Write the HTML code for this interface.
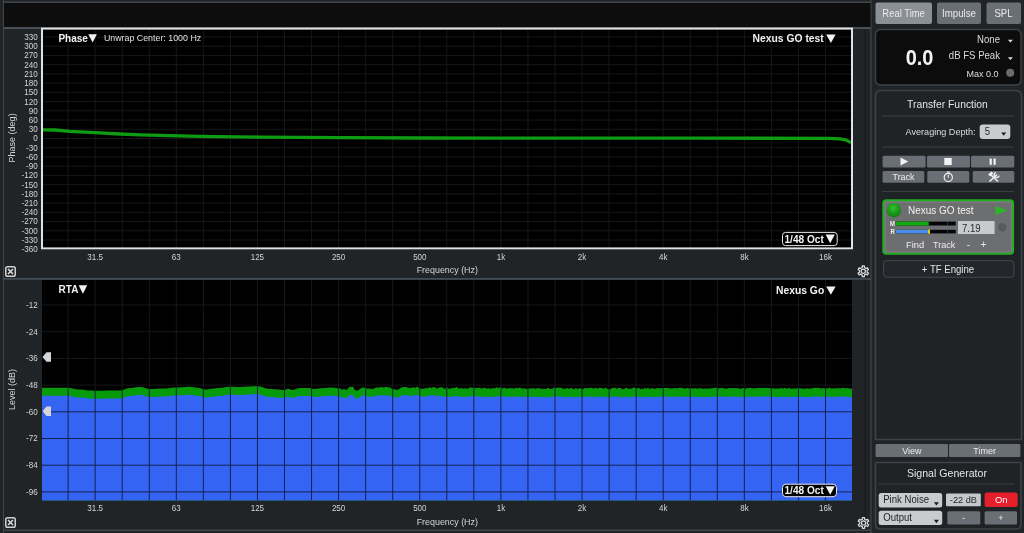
<!DOCTYPE html>
<html><head><meta charset="utf-8"><style>
html,body{margin:0;padding:0;background:#212427;width:1024px;height:533px;overflow:hidden}
svg{display:block;font-family:"Liberation Sans",sans-serif;filter:blur(0.4px)}
</style></head><body>
<svg width="1024" height="533" viewBox="0 0 1024 533">
<rect x="3" y="0" width="1" height="533" fill="#42464b" />
<rect x="870.2" y="0" width="1.4" height="533" fill="#3c4045" />
<rect x="864.2" y="29" width="1.5" height="533" fill="#1c1e21" />
<rect x="3" y="1.5" width="868" height="1.5" fill="#42464b" />
<rect x="4" y="3" width="866.5" height="24" fill="#0d0d0d" />
<rect x="4" y="27" width="867" height="2" fill="#4a5057" />
<rect x="41" y="28" width="812" height="222" fill="#000" />
<line x1="68.1" y1="30" x2="68.1" y2="248" stroke="#171717" stroke-width="1"/>
<line x1="95.15" y1="30" x2="95.15" y2="248" stroke="#171717" stroke-width="1"/>
<line x1="122.2" y1="30" x2="122.2" y2="248" stroke="#171717" stroke-width="1"/>
<line x1="149.25" y1="30" x2="149.25" y2="248" stroke="#171717" stroke-width="1"/>
<line x1="176.3" y1="30" x2="176.3" y2="248" stroke="#171717" stroke-width="1"/>
<line x1="203.35" y1="30" x2="203.35" y2="248" stroke="#171717" stroke-width="1"/>
<line x1="230.4" y1="30" x2="230.4" y2="248" stroke="#171717" stroke-width="1"/>
<line x1="257.45" y1="30" x2="257.45" y2="248" stroke="#171717" stroke-width="1"/>
<line x1="284.5" y1="30" x2="284.5" y2="248" stroke="#171717" stroke-width="1"/>
<line x1="311.55" y1="30" x2="311.55" y2="248" stroke="#171717" stroke-width="1"/>
<line x1="338.6" y1="30" x2="338.6" y2="248" stroke="#171717" stroke-width="1"/>
<line x1="365.65" y1="30" x2="365.65" y2="248" stroke="#171717" stroke-width="1"/>
<line x1="392.7" y1="30" x2="392.7" y2="248" stroke="#171717" stroke-width="1"/>
<line x1="419.75" y1="30" x2="419.75" y2="248" stroke="#171717" stroke-width="1"/>
<line x1="446.8" y1="30" x2="446.8" y2="248" stroke="#171717" stroke-width="1"/>
<line x1="473.85" y1="30" x2="473.85" y2="248" stroke="#171717" stroke-width="1"/>
<line x1="500.9" y1="30" x2="500.9" y2="248" stroke="#171717" stroke-width="1"/>
<line x1="527.95" y1="30" x2="527.95" y2="248" stroke="#171717" stroke-width="1"/>
<line x1="555.0" y1="30" x2="555.0" y2="248" stroke="#171717" stroke-width="1"/>
<line x1="582.05" y1="30" x2="582.05" y2="248" stroke="#171717" stroke-width="1"/>
<line x1="609.1" y1="30" x2="609.1" y2="248" stroke="#171717" stroke-width="1"/>
<line x1="636.15" y1="30" x2="636.15" y2="248" stroke="#171717" stroke-width="1"/>
<line x1="663.2" y1="30" x2="663.2" y2="248" stroke="#171717" stroke-width="1"/>
<line x1="690.25" y1="30" x2="690.25" y2="248" stroke="#171717" stroke-width="1"/>
<line x1="717.3" y1="30" x2="717.3" y2="248" stroke="#171717" stroke-width="1"/>
<line x1="744.35" y1="30" x2="744.35" y2="248" stroke="#171717" stroke-width="1"/>
<line x1="771.4" y1="30" x2="771.4" y2="248" stroke="#171717" stroke-width="1"/>
<line x1="798.45" y1="30" x2="798.45" y2="248" stroke="#171717" stroke-width="1"/>
<line x1="825.5" y1="30" x2="825.5" y2="248" stroke="#171717" stroke-width="1"/>
<line x1="43" y1="37.0" x2="851" y2="37.0" stroke="#171717" stroke-width="1"/>
<line x1="43" y1="46.23" x2="851" y2="46.23" stroke="#171717" stroke-width="1"/>
<line x1="43" y1="55.45" x2="851" y2="55.45" stroke="#171717" stroke-width="1"/>
<line x1="43" y1="64.68" x2="851" y2="64.68" stroke="#171717" stroke-width="1"/>
<line x1="43" y1="73.91" x2="851" y2="73.91" stroke="#171717" stroke-width="1"/>
<line x1="43" y1="83.14" x2="851" y2="83.14" stroke="#171717" stroke-width="1"/>
<line x1="43" y1="92.36" x2="851" y2="92.36" stroke="#171717" stroke-width="1"/>
<line x1="43" y1="101.59" x2="851" y2="101.59" stroke="#171717" stroke-width="1"/>
<line x1="43" y1="110.82" x2="851" y2="110.82" stroke="#171717" stroke-width="1"/>
<line x1="43" y1="120.05" x2="851" y2="120.05" stroke="#171717" stroke-width="1"/>
<line x1="43" y1="129.27" x2="851" y2="129.27" stroke="#171717" stroke-width="1"/>
<line x1="43" y1="138.5" x2="851" y2="138.5" stroke="#171717" stroke-width="1"/>
<line x1="43" y1="147.73" x2="851" y2="147.73" stroke="#171717" stroke-width="1"/>
<line x1="43" y1="156.95" x2="851" y2="156.95" stroke="#171717" stroke-width="1"/>
<line x1="43" y1="166.18" x2="851" y2="166.18" stroke="#171717" stroke-width="1"/>
<line x1="43" y1="175.41" x2="851" y2="175.41" stroke="#171717" stroke-width="1"/>
<line x1="43" y1="184.64" x2="851" y2="184.64" stroke="#171717" stroke-width="1"/>
<line x1="43" y1="193.86" x2="851" y2="193.86" stroke="#171717" stroke-width="1"/>
<line x1="43" y1="203.09" x2="851" y2="203.09" stroke="#171717" stroke-width="1"/>
<line x1="43" y1="212.32" x2="851" y2="212.32" stroke="#171717" stroke-width="1"/>
<line x1="43" y1="221.55" x2="851" y2="221.55" stroke="#171717" stroke-width="1"/>
<line x1="43" y1="230.77" x2="851" y2="230.77" stroke="#171717" stroke-width="1"/>
<line x1="43" y1="240.0" x2="851" y2="240.0" stroke="#171717" stroke-width="1"/>
<path d="M43,129.8 L55,130.0 L70,131.3 L95,132.7 L120,134.0 L140,134.8 L170,135.7 L200,136.3 L260,137.1 L340,137.7 L420,138.0 L500,138.1 L700,138.2 L830,138.3 L840,138.8 L846,140.0 L851,142.6" fill="none" stroke="#0e9c12" stroke-width="3.3" stroke-linejoin="round"/>
<rect x="42" y="28.6" width="810" height="219.8" fill="none" stroke="#e2e2e2" stroke-width="2"/>
<text transform="translate(37.8 39.9) scale(1 1.06)" font-size="8.1" fill="#d4d4d4" text-anchor="end" font-weight="normal" >330</text>
<text transform="translate(37.8 49.1) scale(1 1.06)" font-size="8.1" fill="#d4d4d4" text-anchor="end" font-weight="normal" >300</text>
<text transform="translate(37.8 58.4) scale(1 1.06)" font-size="8.1" fill="#d4d4d4" text-anchor="end" font-weight="normal" >270</text>
<text transform="translate(37.8 67.6) scale(1 1.06)" font-size="8.1" fill="#d4d4d4" text-anchor="end" font-weight="normal" >240</text>
<text transform="translate(37.8 76.8) scale(1 1.06)" font-size="8.1" fill="#d4d4d4" text-anchor="end" font-weight="normal" >210</text>
<text transform="translate(37.8 86.0) scale(1 1.06)" font-size="8.1" fill="#d4d4d4" text-anchor="end" font-weight="normal" >180</text>
<text transform="translate(37.8 95.3) scale(1 1.06)" font-size="8.1" fill="#d4d4d4" text-anchor="end" font-weight="normal" >150</text>
<text transform="translate(37.8 104.5) scale(1 1.06)" font-size="8.1" fill="#d4d4d4" text-anchor="end" font-weight="normal" >120</text>
<text transform="translate(37.8 113.7) scale(1 1.06)" font-size="8.1" fill="#d4d4d4" text-anchor="end" font-weight="normal" >90</text>
<text transform="translate(37.8 122.9) scale(1 1.06)" font-size="8.1" fill="#d4d4d4" text-anchor="end" font-weight="normal" >60</text>
<text transform="translate(37.8 132.2) scale(1 1.06)" font-size="8.1" fill="#d4d4d4" text-anchor="end" font-weight="normal" >30</text>
<text transform="translate(37.8 141.4) scale(1 1.06)" font-size="8.1" fill="#d4d4d4" text-anchor="end" font-weight="normal" >0</text>
<text transform="translate(37.8 150.6) scale(1 1.06)" font-size="8.1" fill="#d4d4d4" text-anchor="end" font-weight="normal" >-30</text>
<text transform="translate(37.8 159.9) scale(1 1.06)" font-size="8.1" fill="#d4d4d4" text-anchor="end" font-weight="normal" >-60</text>
<text transform="translate(37.8 169.1) scale(1 1.06)" font-size="8.1" fill="#d4d4d4" text-anchor="end" font-weight="normal" >-90</text>
<text transform="translate(37.8 178.3) scale(1 1.06)" font-size="8.1" fill="#d4d4d4" text-anchor="end" font-weight="normal" >-120</text>
<text transform="translate(37.8 187.5) scale(1 1.06)" font-size="8.1" fill="#d4d4d4" text-anchor="end" font-weight="normal" >-150</text>
<text transform="translate(37.8 196.8) scale(1 1.06)" font-size="8.1" fill="#d4d4d4" text-anchor="end" font-weight="normal" >-180</text>
<text transform="translate(37.8 206.0) scale(1 1.06)" font-size="8.1" fill="#d4d4d4" text-anchor="end" font-weight="normal" >-210</text>
<text transform="translate(37.8 215.2) scale(1 1.06)" font-size="8.1" fill="#d4d4d4" text-anchor="end" font-weight="normal" >-240</text>
<text transform="translate(37.8 224.4) scale(1 1.06)" font-size="8.1" fill="#d4d4d4" text-anchor="end" font-weight="normal" >-270</text>
<text transform="translate(37.8 233.7) scale(1 1.06)" font-size="8.1" fill="#d4d4d4" text-anchor="end" font-weight="normal" >-300</text>
<text transform="translate(37.8 242.9) scale(1 1.06)" font-size="8.1" fill="#d4d4d4" text-anchor="end" font-weight="normal" >-330</text>
<text transform="translate(37.8 252.1) scale(1 1.06)" font-size="8.1" fill="#d4d4d4" text-anchor="end" font-weight="normal" >-360</text>
<text transform="translate(95.1 259.6) scale(1 1.06)" font-size="8.0" fill="#d4d4d4" text-anchor="middle" font-weight="normal" >31.5</text>
<text transform="translate(176.3 259.6) scale(1 1.06)" font-size="8.0" fill="#d4d4d4" text-anchor="middle" font-weight="normal" >63</text>
<text transform="translate(257.4 259.6) scale(1 1.06)" font-size="8.0" fill="#d4d4d4" text-anchor="middle" font-weight="normal" >125</text>
<text transform="translate(338.6 259.6) scale(1 1.06)" font-size="8.0" fill="#d4d4d4" text-anchor="middle" font-weight="normal" >250</text>
<text transform="translate(419.8 259.6) scale(1 1.06)" font-size="8.0" fill="#d4d4d4" text-anchor="middle" font-weight="normal" >500</text>
<text transform="translate(500.9 259.6) scale(1 1.06)" font-size="8.0" fill="#d4d4d4" text-anchor="middle" font-weight="normal" >1k</text>
<text transform="translate(582.0 259.6) scale(1 1.06)" font-size="8.0" fill="#d4d4d4" text-anchor="middle" font-weight="normal" >2k</text>
<text transform="translate(663.2 259.6) scale(1 1.06)" font-size="8.0" fill="#d4d4d4" text-anchor="middle" font-weight="normal" >4k</text>
<text transform="translate(744.4 259.6) scale(1 1.06)" font-size="8.0" fill="#d4d4d4" text-anchor="middle" font-weight="normal" >8k</text>
<text transform="translate(825.5 259.6) scale(1 1.06)" font-size="8.0" fill="#d4d4d4" text-anchor="middle" font-weight="normal" >16k</text>
<text transform="translate(447.3 273.1) scale(1 1.06)" font-size="8.9" fill="#d4d4d4" text-anchor="middle" font-weight="normal" >Frequency (Hz)</text>
<text x="15.3" y="137.9" font-size="9" fill="#d4d4d4" text-anchor="middle" transform="rotate(-90 15.3 137.9)">Phase (deg)</text>
<text x="58.4" y="41.6" font-size="10.0" fill="#f2f2f2" text-anchor="start" font-weight="bold" >Phase</text>
<path d="M88.3,34.3 L96.9,34.3 L92.6,42.6 Z" fill="#f2f2f2"/>
<text transform="translate(103.9 40.8) scale(1 1.06)" font-size="8.85" fill="#e0e0e0" text-anchor="start" font-weight="normal" >Unwrap Center: 1000 Hz</text>
<text transform="translate(823.8 41.8) scale(1 0.97)" font-size="10.35" fill="#f2f2f2" text-anchor="end" font-weight="bold" >Nexus GO test</text>
<path d="M826.2,34.6 L835.6,34.6 L830.9,43 Z" fill="#f2f2f2"/>
<rect x="782.5" y="232.4" width="54.7" height="13.2" rx="3" fill="#000" stroke="#e8e8e8" stroke-width="1"/>
<text transform="translate(784.5 242.8) scale(1 1.06)" font-size="10.1" fill="#f2f2f2" text-anchor="start" font-weight="bold" >1/48 Oct</text>
<path d="M825.6,234.6 L834.8,234.6 L830.2,243.2 Z" fill="#f2f2f2"/>
<rect x="5.75" y="266.75" width="9.5" height="9.5" rx="1.8" fill="none" stroke="#d0d0d0" stroke-width="1.5"/>
<path d="M8,269 L13,274 M13,269 L8,274" stroke="#e0e0e0" stroke-width="1.5"/>
<polygon points="862.25,265.90 864.35,265.90 864.44,267.57 865.96,268.45 867.45,267.69 868.50,269.51 867.10,270.42 867.10,272.18 868.50,273.09 867.45,274.91 865.96,274.15 864.44,275.03 864.35,276.70 862.25,276.70 862.16,275.03 860.64,274.15 859.15,274.91 858.10,273.09 859.50,272.18 859.50,270.42 858.10,269.51 859.15,267.69 860.64,268.45 862.16,267.57" fill="none" stroke="#dcdcdc" stroke-width="1.25" stroke-linejoin="round"/>
<circle cx="863.3" cy="271.3" r="2.1" fill="none" stroke="#dcdcdc" stroke-width="1.2"/>
<rect x="3" y="278.2" width="868" height="1.4" fill="#4d5862" />
<rect x="42" y="280" width="810" height="220.5" fill="#000" />
<line x1="68.1" y1="280" x2="68.1" y2="500.5" stroke="#171717" stroke-width="1"/>
<line x1="95.15" y1="280" x2="95.15" y2="500.5" stroke="#171717" stroke-width="1"/>
<line x1="122.2" y1="280" x2="122.2" y2="500.5" stroke="#171717" stroke-width="1"/>
<line x1="149.25" y1="280" x2="149.25" y2="500.5" stroke="#171717" stroke-width="1"/>
<line x1="176.3" y1="280" x2="176.3" y2="500.5" stroke="#171717" stroke-width="1"/>
<line x1="203.35" y1="280" x2="203.35" y2="500.5" stroke="#171717" stroke-width="1"/>
<line x1="230.4" y1="280" x2="230.4" y2="500.5" stroke="#171717" stroke-width="1"/>
<line x1="257.45" y1="280" x2="257.45" y2="500.5" stroke="#171717" stroke-width="1"/>
<line x1="284.5" y1="280" x2="284.5" y2="500.5" stroke="#171717" stroke-width="1"/>
<line x1="311.55" y1="280" x2="311.55" y2="500.5" stroke="#171717" stroke-width="1"/>
<line x1="338.6" y1="280" x2="338.6" y2="500.5" stroke="#171717" stroke-width="1"/>
<line x1="365.65" y1="280" x2="365.65" y2="500.5" stroke="#171717" stroke-width="1"/>
<line x1="392.7" y1="280" x2="392.7" y2="500.5" stroke="#171717" stroke-width="1"/>
<line x1="419.75" y1="280" x2="419.75" y2="500.5" stroke="#171717" stroke-width="1"/>
<line x1="446.8" y1="280" x2="446.8" y2="500.5" stroke="#171717" stroke-width="1"/>
<line x1="473.85" y1="280" x2="473.85" y2="500.5" stroke="#171717" stroke-width="1"/>
<line x1="500.9" y1="280" x2="500.9" y2="500.5" stroke="#171717" stroke-width="1"/>
<line x1="527.95" y1="280" x2="527.95" y2="500.5" stroke="#171717" stroke-width="1"/>
<line x1="555.0" y1="280" x2="555.0" y2="500.5" stroke="#171717" stroke-width="1"/>
<line x1="582.05" y1="280" x2="582.05" y2="500.5" stroke="#171717" stroke-width="1"/>
<line x1="609.1" y1="280" x2="609.1" y2="500.5" stroke="#171717" stroke-width="1"/>
<line x1="636.15" y1="280" x2="636.15" y2="500.5" stroke="#171717" stroke-width="1"/>
<line x1="663.2" y1="280" x2="663.2" y2="500.5" stroke="#171717" stroke-width="1"/>
<line x1="690.25" y1="280" x2="690.25" y2="500.5" stroke="#171717" stroke-width="1"/>
<line x1="717.3" y1="280" x2="717.3" y2="500.5" stroke="#171717" stroke-width="1"/>
<line x1="744.35" y1="280" x2="744.35" y2="500.5" stroke="#171717" stroke-width="1"/>
<line x1="771.4" y1="280" x2="771.4" y2="500.5" stroke="#171717" stroke-width="1"/>
<line x1="798.45" y1="280" x2="798.45" y2="500.5" stroke="#171717" stroke-width="1"/>
<line x1="825.5" y1="280" x2="825.5" y2="500.5" stroke="#171717" stroke-width="1"/>
<line x1="42" y1="305.0" x2="852" y2="305.0" stroke="#171717" stroke-width="1"/>
<line x1="42" y1="331.7" x2="852" y2="331.7" stroke="#171717" stroke-width="1"/>
<line x1="42" y1="358.4" x2="852" y2="358.4" stroke="#171717" stroke-width="1"/>
<line x1="42" y1="385.1" x2="852" y2="385.1" stroke="#171717" stroke-width="1"/>
<line x1="42" y1="411.8" x2="852" y2="411.8" stroke="#171717" stroke-width="1"/>
<line x1="42" y1="438.5" x2="852" y2="438.5" stroke="#171717" stroke-width="1"/>
<line x1="42" y1="465.2" x2="852" y2="465.2" stroke="#171717" stroke-width="1"/>
<line x1="42" y1="491.9" x2="852" y2="491.9" stroke="#171717" stroke-width="1"/>
<polygon points="42.0,387.80 44.0,387.80 46.0,387.80 48.0,387.80 50.0,387.80 52.0,387.80 54.0,387.80 56.0,387.80 58.0,387.80 60.0,387.80 62.0,387.80 64.0,387.80 66.0,387.80 68.0,387.82 70.0,388.01 72.0,388.35 74.0,388.75 76.0,389.13 78.0,389.40 80.0,389.50 82.0,389.60 84.0,389.85 86.0,390.15 88.0,390.40 90.0,390.50 92.0,390.57 94.0,390.68 96.0,390.70 98.0,390.69 100.0,390.68 102.0,390.66 104.0,390.64 106.0,390.62 108.0,390.59 110.0,390.57 112.0,390.55 114.0,390.53 116.0,390.51 118.0,390.50 120.0,390.50 122.0,390.26 124.0,389.64 126.0,388.86 128.0,388.24 130.0,388.00 132.0,387.89 134.0,387.62 136.0,387.28 138.0,387.01 140.0,386.90 142.0,387.10 144.0,387.63 146.0,388.27 148.0,388.80 150.0,389.00 152.0,388.98 154.0,388.92 156.0,388.83 158.0,388.72 160.0,388.62 162.0,388.55 164.0,388.51 166.0,388.48 168.0,388.33 170.0,388.07 172.0,387.79 174.0,387.58 176.0,387.50 178.0,387.47 180.0,387.37 182.0,387.23 184.0,387.07 186.0,386.93 188.0,386.83 190.0,386.80 192.0,386.91 194.0,387.21 196.0,387.59 198.0,387.89 200.0,388.00 202.0,388.75 204.0,389.50 206.0,389.44 208.0,389.28 210.0,389.04 212.0,388.75 214.0,388.46 216.0,388.22 218.0,388.06 220.0,388.00 222.0,387.82 224.0,387.40 226.0,386.98 228.0,386.80 230.0,386.81 232.0,386.82 234.0,386.85 236.0,386.88 238.0,386.89 240.0,386.90 242.0,386.88 244.0,386.81 246.0,386.71 248.0,386.58 250.0,386.45 252.0,386.34 254.0,386.25 256.0,386.21 258.0,386.24 260.0,386.55 262.0,387.10 264.0,387.77 266.0,388.40 268.0,388.84 270.0,389.00 272.0,389.04 274.0,389.17 276.0,389.35 278.0,389.55 280.0,389.75 282.0,389.90 284.0,389.99 286.0,389.62 288.0,388.50 290.0,389.25 292.0,390.00 294.0,389.71 296.0,389.00 298.0,388.29 300.0,388.00 302.0,388.00 304.0,388.00 306.0,388.00 308.0,388.00 310.0,388.00 312.0,388.75 314.0,388.98 316.0,388.85 318.0,388.63 320.0,388.37 322.0,388.15 324.0,388.02 326.0,387.98 328.0,387.81 330.0,387.59 332.0,387.50 334.0,387.66 336.0,388.05 338.0,388.44 340.0,388.18 342.0,389.68 343.5,389.10 345.0,389.14 346.5,390.37 348.0,388.55 349.5,386.80 351.0,387.08 352.5,386.59 354.0,388.55 355.5,390.42 357.0,390.65 358.5,390.14 360.0,388.80 361.5,388.27 363.0,387.27 364.5,388.01 366.0,387.70 367.5,388.75 369.0,388.55 370.5,388.48 372.0,389.18 373.5,388.87 375.0,388.01 376.5,387.58 378.0,387.59 379.5,387.52 381.0,386.72 382.5,387.41 384.0,387.30 385.5,386.88 387.0,387.02 388.5,387.57 390.0,387.57 391.5,388.55 393.0,389.48 394.5,388.88 396.0,389.75 397.5,389.66 399.0,389.30 400.5,387.89 402.0,387.31 403.5,387.09 405.0,386.95 406.5,386.95 408.0,387.66 409.5,388.09 411.0,387.92 412.5,387.21 414.0,387.48 415.5,387.75 417.0,386.58 418.5,387.84 420.0,388.59 421.5,388.65 423.0,388.83 424.5,388.45 426.0,387.85 427.5,388.60 429.0,387.28 430.5,387.71 432.0,387.85 433.5,386.90 435.0,387.13 436.5,388.40 438.0,388.26 439.5,387.40 441.0,387.33 442.5,387.37 444.0,388.73 445.5,388.55 447.0,387.37 448.5,388.59 450.0,388.87 451.5,388.29 453.0,387.74 454.5,388.10 456.0,387.35 457.5,387.15 459.0,388.87 460.5,388.30 462.0,388.08 463.5,388.82 465.0,387.92 466.5,388.72 468.0,388.64 469.5,387.54 471.0,387.62 472.5,387.70 474.0,387.61 475.5,388.24 477.0,387.66 478.5,387.95 480.0,387.44 481.5,388.85 483.0,387.85 484.5,388.05 486.0,388.28 487.5,388.87 489.0,388.00 490.5,388.90 492.0,388.16 493.5,388.22 495.0,388.22 496.5,387.31 498.0,388.08 499.5,387.62 501.0,387.31 502.5,388.75 504.0,387.62 505.5,388.17 507.0,388.63 508.5,388.33 510.0,387.92 511.5,388.28 513.0,388.35 514.5,388.77 516.0,387.55 517.5,388.37 519.0,387.82 520.5,387.87 522.0,388.77 523.5,388.29 525.0,388.39 526.5,388.75 528.0,389.03 529.5,388.19 531.0,388.50 532.5,388.31 534.0,388.32 535.5,388.65 537.0,388.21 538.5,388.36 540.0,388.26 541.5,389.09 543.0,388.66 544.5,388.98 546.0,389.10 547.5,387.87 549.0,388.41 550.5,389.10 552.0,388.92 553.5,387.65 555.0,387.62 556.5,388.20 558.0,387.54 559.5,387.84 561.0,387.54 562.5,388.62 564.0,388.82 565.5,389.03 567.0,387.69 568.5,388.71 570.0,388.61 571.5,387.68 573.0,389.01 574.5,389.17 576.0,387.82 577.5,389.15 579.0,388.15 580.5,388.31 582.0,389.22 583.5,388.94 585.0,387.73 586.5,388.22 588.0,388.37 589.5,388.06 591.0,387.80 592.5,388.03 594.0,388.76 595.5,387.49 597.0,388.46 598.5,388.26 600.0,387.50 601.5,388.06 603.0,388.59 604.5,388.39 606.0,387.59 607.5,389.25 609.0,388.90 610.5,389.23 612.0,387.67 613.5,387.96 615.0,387.56 616.5,388.89 618.0,387.98 619.5,387.72 621.0,388.25 622.5,389.13 624.0,388.97 625.5,387.96 627.0,387.76 628.5,389.15 630.0,388.52 631.5,388.76 633.0,387.66 634.5,387.60 636.0,388.74 637.5,388.27 639.0,387.63 640.5,389.19 642.0,388.64 643.5,388.94 645.0,387.65 646.5,389.04 648.0,387.62 649.5,389.05 651.0,388.34 652.5,388.20 654.0,388.46 655.5,388.91 657.0,388.11 658.5,387.95 660.0,388.42 661.5,388.08 663.0,387.92 664.5,387.98 666.0,387.84 667.5,388.02 669.0,388.16 670.5,388.14 672.0,388.69 673.5,388.12 675.0,388.37 676.5,387.98 678.0,388.18 679.5,387.79 681.0,388.06 682.5,387.78 684.0,388.64 685.5,388.42 687.0,387.98 688.5,388.32 690.0,388.87 691.5,387.88 693.0,388.73 694.5,388.26 696.0,388.33 697.5,388.74 699.0,388.21 700.5,388.34 702.0,388.56 703.5,388.91 705.0,388.14 706.5,388.72 708.0,388.57 709.5,388.48 711.0,388.20 712.5,388.13 714.0,387.78 715.5,387.87 717.0,387.80 718.5,388.60 720.0,388.02 721.5,387.90 723.0,387.81 724.5,388.72 726.0,388.75 727.5,388.51 729.0,388.04 730.5,387.99 732.0,388.05 733.5,388.25 735.0,387.89 736.5,388.24 738.0,388.02 739.5,388.85 741.0,388.87 742.5,388.36 744.0,387.99 745.5,388.86 747.0,388.07 748.5,388.13 750.0,387.70 751.5,388.16 753.0,388.27 754.5,388.30 756.0,387.94 757.5,388.30 759.0,387.70 760.5,388.01 762.0,387.80 763.5,388.17 765.0,387.74 766.5,387.71 768.0,388.05 769.5,387.96 771.0,388.38 772.5,388.32 774.0,388.58 775.5,388.47 777.0,388.53 778.5,388.73 780.0,388.14 781.5,388.06 783.0,388.85 784.5,387.85 786.0,388.53 787.5,388.43 789.0,387.71 790.5,388.66 792.0,388.73 793.5,388.41 795.0,388.53 796.5,388.62 798.0,387.81 799.5,388.27 801.0,388.25 802.5,388.64 804.0,388.60 805.5,388.63 807.0,388.34 808.5,388.70 810.0,388.45 811.5,388.46 813.0,387.90 814.5,387.66 816.0,387.78 817.5,388.05 819.0,387.75 820.5,388.62 822.0,388.29 823.5,388.37 825.0,388.37 826.5,388.43 828.0,388.20 829.5,387.61 831.0,388.57 832.5,388.51 834.0,388.21 835.5,388.25 837.0,388.40 838.5,387.68 840.0,388.49 841.5,387.90 843.0,387.69 844.5,387.92 846.0,388.48 847.5,387.85 849.0,388.49 850.5,388.77 852.0,388.19 852.0,388.20 852,500.5 42,500.5" fill="#079a0b"/>
<polygon points="42.0,395.80 44.0,395.80 46.0,395.80 48.0,395.80 50.0,395.80 52.0,395.80 54.0,395.80 56.0,395.80 58.0,395.80 60.0,395.80 62.0,395.80 64.0,395.80 66.0,395.80 68.0,395.82 70.0,396.01 72.0,396.35 74.0,396.75 76.0,397.13 78.0,397.40 80.0,397.50 82.0,397.60 84.0,397.85 86.0,398.15 88.0,398.40 90.0,398.50 92.0,398.57 94.0,398.68 96.0,398.70 98.0,398.69 100.0,398.68 102.0,398.66 104.0,398.64 106.0,398.62 108.0,398.59 110.0,398.57 112.0,398.55 114.0,398.53 116.0,398.51 118.0,398.50 120.0,398.50 122.0,398.26 124.0,397.64 126.0,396.86 128.0,396.24 130.0,396.00 132.0,395.89 134.0,395.62 136.0,395.28 138.0,395.01 140.0,394.90 142.0,395.10 144.0,395.63 146.0,396.27 148.0,396.80 150.0,397.00 152.0,396.98 154.0,396.92 156.0,396.83 158.0,396.72 160.0,396.62 162.0,396.55 164.0,396.51 166.0,396.48 168.0,396.33 170.0,396.07 172.0,395.79 174.0,395.58 176.0,395.50 178.0,395.47 180.0,395.37 182.0,395.23 184.0,395.07 186.0,394.93 188.0,394.83 190.0,394.80 192.0,394.91 194.0,395.21 196.0,395.59 198.0,395.89 200.0,396.00 202.0,396.75 204.0,397.50 206.0,397.44 208.0,397.28 210.0,397.04 212.0,396.75 214.0,396.46 216.0,396.22 218.0,396.06 220.0,396.00 222.0,395.82 224.0,395.40 226.0,394.98 228.0,394.80 230.0,394.81 232.0,394.82 234.0,394.85 236.0,394.88 238.0,394.89 240.0,394.90 242.0,394.88 244.0,394.81 246.0,394.71 248.0,394.58 250.0,394.45 252.0,394.34 254.0,394.25 256.0,394.21 258.0,394.24 260.0,394.55 262.0,395.10 264.0,395.77 266.0,396.40 268.0,396.84 270.0,397.00 272.0,397.04 274.0,397.17 276.0,397.35 278.0,397.55 280.0,397.75 282.0,397.90 284.0,397.99 286.0,397.62 288.0,396.50 290.0,397.25 292.0,398.00 294.0,397.71 296.0,397.00 298.0,396.29 300.0,396.00 302.0,396.00 304.0,396.00 306.0,396.00 308.0,396.00 310.0,396.00 312.0,396.75 314.0,396.98 316.0,396.85 318.0,396.63 320.0,396.37 322.0,396.15 324.0,396.02 326.0,395.98 328.0,395.81 330.0,395.59 332.0,395.50 334.0,395.66 336.0,396.05 338.0,396.44 340.0,396.30 342.0,397.50 343.5,397.28 345.0,397.40 346.5,398.13 348.0,396.54 349.5,394.99 351.0,395.05 352.5,394.84 354.0,396.54 355.5,398.16 357.0,398.46 358.5,398.04 360.0,396.93 361.5,396.34 363.0,395.45 364.5,395.87 366.0,395.68 367.5,396.60 369.0,396.64 370.5,396.63 372.0,397.02 373.5,396.61 375.0,395.82 376.5,395.41 378.0,395.42 379.5,395.39 381.0,394.87 382.5,395.40 384.0,395.38 385.5,395.14 387.0,395.28 388.5,395.69 390.0,395.70 391.5,396.45 393.0,397.23 394.5,396.91 396.0,397.51 397.5,397.40 399.0,397.06 400.5,395.96 402.0,395.46 403.5,395.24 405.0,395.12 406.5,395.11 408.0,395.59 409.5,395.88 411.0,395.73 412.5,395.22 414.0,395.40 415.5,395.59 417.0,394.80 418.5,395.76 420.0,396.37 421.5,396.50 423.0,396.69 424.5,396.46 426.0,396.02 427.5,396.44 429.0,395.37 430.5,395.54 432.0,395.59 433.5,394.95 435.0,395.18 436.5,396.16 438.0,396.14 439.5,395.57 441.0,396.03 442.5,396.06 444.0,397.01 445.5,396.89 447.0,396.06 448.5,396.92 450.0,397.11 451.5,396.71 453.0,396.32 454.5,396.58 456.0,396.05 457.5,395.91 459.0,397.12 460.5,396.72 462.0,396.57 463.5,397.09 465.0,396.46 466.5,397.02 468.0,396.97 469.5,396.20 471.0,396.25 472.5,396.31 474.0,396.25 475.5,396.69 477.0,396.29 478.5,396.49 480.0,396.14 481.5,397.13 483.0,396.43 484.5,396.57 486.0,396.74 487.5,397.15 489.0,396.55 490.5,397.18 492.0,396.66 493.5,396.71 495.0,396.70 496.5,396.07 498.0,396.61 499.5,396.29 501.0,396.08 502.5,397.08 504.0,396.30 505.5,396.69 507.0,397.01 508.5,396.80 510.0,396.52 511.5,396.77 513.0,396.82 514.5,397.11 516.0,396.26 517.5,396.84 519.0,396.45 520.5,396.49 522.0,397.12 523.5,396.79 525.0,396.86 526.5,397.11 528.0,397.31 529.5,396.72 531.0,396.94 532.5,396.80 534.0,396.81 535.5,397.04 537.0,396.74 538.5,396.84 540.0,396.77 541.5,397.36 543.0,397.05 544.5,397.27 546.0,397.36 547.5,396.50 549.0,396.88 550.5,397.36 552.0,397.23 553.5,396.35 555.0,396.33 556.5,396.73 558.0,396.27 559.5,396.48 561.0,396.27 562.5,397.03 564.0,397.17 565.5,397.32 567.0,396.38 568.5,397.09 570.0,397.02 571.5,396.37 573.0,397.31 574.5,397.42 576.0,396.48 577.5,397.40 579.0,396.70 580.5,396.82 582.0,397.45 583.5,397.26 585.0,396.42 586.5,396.76 588.0,396.87 589.5,396.65 591.0,396.47 592.5,396.63 594.0,397.14 595.5,396.25 597.0,396.93 598.5,396.79 600.0,396.26 601.5,396.66 603.0,397.03 604.5,396.89 606.0,396.33 607.5,397.49 609.0,397.24 610.5,397.47 612.0,396.38 613.5,396.59 615.0,396.31 616.5,397.24 618.0,396.60 619.5,396.42 621.0,396.79 622.5,397.41 624.0,397.30 625.5,396.59 627.0,396.45 628.5,397.42 630.0,396.99 631.5,397.15 633.0,396.38 634.5,396.34 636.0,397.14 637.5,396.81 639.0,396.36 640.5,397.45 642.0,397.07 643.5,397.28 645.0,396.37 646.5,397.35 648.0,396.35 649.5,397.35 651.0,396.86 652.5,396.76 654.0,396.94 655.5,397.25 657.0,396.70 658.5,396.58 660.0,396.91 661.5,396.67 663.0,396.56 664.5,396.60 666.0,396.51 667.5,396.63 669.0,396.72 670.5,396.71 672.0,397.09 673.5,396.70 675.0,396.87 676.5,396.60 678.0,396.74 679.5,396.46 681.0,396.65 682.5,396.45 684.0,397.06 685.5,396.90 687.0,396.59 688.5,396.83 690.0,397.22 691.5,396.52 693.0,397.11 694.5,396.79 696.0,396.84 697.5,397.12 699.0,396.75 700.5,396.84 702.0,396.99 703.5,397.23 705.0,396.70 706.5,397.10 708.0,397.00 709.5,396.94 711.0,396.74 712.5,396.69 714.0,396.44 715.5,396.50 717.0,396.45 718.5,397.01 720.0,396.60 721.5,396.53 723.0,396.46 724.5,397.09 726.0,397.12 727.5,396.95 729.0,396.62 730.5,396.59 732.0,396.63 733.5,396.77 735.0,396.51 736.5,396.75 738.0,396.60 739.5,397.19 741.0,397.20 742.5,396.84 744.0,396.59 745.5,397.19 747.0,396.64 748.5,396.68 750.0,396.38 751.5,396.70 753.0,396.78 754.5,396.80 756.0,396.54 757.5,396.80 759.0,396.38 760.5,396.59 762.0,396.45 763.5,396.71 765.0,396.40 766.5,396.39 768.0,396.62 769.5,396.56 771.0,396.85 772.5,396.81 774.0,396.99 775.5,396.91 777.0,396.96 778.5,397.09 780.0,396.68 781.5,396.62 783.0,397.18 784.5,396.47 786.0,396.95 787.5,396.88 789.0,396.38 790.5,397.04 792.0,397.08 793.5,396.86 795.0,396.95 796.5,397.01 798.0,396.44 799.5,396.77 801.0,396.75 802.5,397.02 804.0,396.99 805.5,397.01 807.0,396.81 808.5,397.06 810.0,396.88 811.5,396.89 813.0,396.50 814.5,396.33 816.0,396.42 817.5,396.60 819.0,396.39 820.5,397.00 822.0,396.77 823.5,396.82 825.0,396.82 826.5,396.86 828.0,396.70 829.5,396.29 831.0,396.96 832.5,396.92 834.0,396.71 835.5,396.73 837.0,396.84 838.5,396.34 840.0,396.90 841.5,396.49 843.0,396.34 844.5,396.50 846.0,396.89 847.5,396.45 849.0,396.90 850.5,397.10 852.0,396.69 852.0,397.00 852,500.5 42,500.5" fill="#3664f2"/>
<clipPath id="sp"><polygon points="42.0,387.80 44.0,387.80 46.0,387.80 48.0,387.80 50.0,387.80 52.0,387.80 54.0,387.80 56.0,387.80 58.0,387.80 60.0,387.80 62.0,387.80 64.0,387.80 66.0,387.80 68.0,387.82 70.0,388.01 72.0,388.35 74.0,388.75 76.0,389.13 78.0,389.40 80.0,389.50 82.0,389.60 84.0,389.85 86.0,390.15 88.0,390.40 90.0,390.50 92.0,390.57 94.0,390.68 96.0,390.70 98.0,390.69 100.0,390.68 102.0,390.66 104.0,390.64 106.0,390.62 108.0,390.59 110.0,390.57 112.0,390.55 114.0,390.53 116.0,390.51 118.0,390.50 120.0,390.50 122.0,390.26 124.0,389.64 126.0,388.86 128.0,388.24 130.0,388.00 132.0,387.89 134.0,387.62 136.0,387.28 138.0,387.01 140.0,386.90 142.0,387.10 144.0,387.63 146.0,388.27 148.0,388.80 150.0,389.00 152.0,388.98 154.0,388.92 156.0,388.83 158.0,388.72 160.0,388.62 162.0,388.55 164.0,388.51 166.0,388.48 168.0,388.33 170.0,388.07 172.0,387.79 174.0,387.58 176.0,387.50 178.0,387.47 180.0,387.37 182.0,387.23 184.0,387.07 186.0,386.93 188.0,386.83 190.0,386.80 192.0,386.91 194.0,387.21 196.0,387.59 198.0,387.89 200.0,388.00 202.0,388.75 204.0,389.50 206.0,389.44 208.0,389.28 210.0,389.04 212.0,388.75 214.0,388.46 216.0,388.22 218.0,388.06 220.0,388.00 222.0,387.82 224.0,387.40 226.0,386.98 228.0,386.80 230.0,386.81 232.0,386.82 234.0,386.85 236.0,386.88 238.0,386.89 240.0,386.90 242.0,386.88 244.0,386.81 246.0,386.71 248.0,386.58 250.0,386.45 252.0,386.34 254.0,386.25 256.0,386.21 258.0,386.24 260.0,386.55 262.0,387.10 264.0,387.77 266.0,388.40 268.0,388.84 270.0,389.00 272.0,389.04 274.0,389.17 276.0,389.35 278.0,389.55 280.0,389.75 282.0,389.90 284.0,389.99 286.0,389.62 288.0,388.50 290.0,389.25 292.0,390.00 294.0,389.71 296.0,389.00 298.0,388.29 300.0,388.00 302.0,388.00 304.0,388.00 306.0,388.00 308.0,388.00 310.0,388.00 312.0,388.75 314.0,388.98 316.0,388.85 318.0,388.63 320.0,388.37 322.0,388.15 324.0,388.02 326.0,387.98 328.0,387.81 330.0,387.59 332.0,387.50 334.0,387.66 336.0,388.05 338.0,388.44 340.0,388.18 342.0,389.68 343.5,389.10 345.0,389.14 346.5,390.37 348.0,388.55 349.5,386.80 351.0,387.08 352.5,386.59 354.0,388.55 355.5,390.42 357.0,390.65 358.5,390.14 360.0,388.80 361.5,388.27 363.0,387.27 364.5,388.01 366.0,387.70 367.5,388.75 369.0,388.55 370.5,388.48 372.0,389.18 373.5,388.87 375.0,388.01 376.5,387.58 378.0,387.59 379.5,387.52 381.0,386.72 382.5,387.41 384.0,387.30 385.5,386.88 387.0,387.02 388.5,387.57 390.0,387.57 391.5,388.55 393.0,389.48 394.5,388.88 396.0,389.75 397.5,389.66 399.0,389.30 400.5,387.89 402.0,387.31 403.5,387.09 405.0,386.95 406.5,386.95 408.0,387.66 409.5,388.09 411.0,387.92 412.5,387.21 414.0,387.48 415.5,387.75 417.0,386.58 418.5,387.84 420.0,388.59 421.5,388.65 423.0,388.83 424.5,388.45 426.0,387.85 427.5,388.60 429.0,387.28 430.5,387.71 432.0,387.85 433.5,386.90 435.0,387.13 436.5,388.40 438.0,388.26 439.5,387.40 441.0,387.33 442.5,387.37 444.0,388.73 445.5,388.55 447.0,387.37 448.5,388.59 450.0,388.87 451.5,388.29 453.0,387.74 454.5,388.10 456.0,387.35 457.5,387.15 459.0,388.87 460.5,388.30 462.0,388.08 463.5,388.82 465.0,387.92 466.5,388.72 468.0,388.64 469.5,387.54 471.0,387.62 472.5,387.70 474.0,387.61 475.5,388.24 477.0,387.66 478.5,387.95 480.0,387.44 481.5,388.85 483.0,387.85 484.5,388.05 486.0,388.28 487.5,388.87 489.0,388.00 490.5,388.90 492.0,388.16 493.5,388.22 495.0,388.22 496.5,387.31 498.0,388.08 499.5,387.62 501.0,387.31 502.5,388.75 504.0,387.62 505.5,388.17 507.0,388.63 508.5,388.33 510.0,387.92 511.5,388.28 513.0,388.35 514.5,388.77 516.0,387.55 517.5,388.37 519.0,387.82 520.5,387.87 522.0,388.77 523.5,388.29 525.0,388.39 526.5,388.75 528.0,389.03 529.5,388.19 531.0,388.50 532.5,388.31 534.0,388.32 535.5,388.65 537.0,388.21 538.5,388.36 540.0,388.26 541.5,389.09 543.0,388.66 544.5,388.98 546.0,389.10 547.5,387.87 549.0,388.41 550.5,389.10 552.0,388.92 553.5,387.65 555.0,387.62 556.5,388.20 558.0,387.54 559.5,387.84 561.0,387.54 562.5,388.62 564.0,388.82 565.5,389.03 567.0,387.69 568.5,388.71 570.0,388.61 571.5,387.68 573.0,389.01 574.5,389.17 576.0,387.82 577.5,389.15 579.0,388.15 580.5,388.31 582.0,389.22 583.5,388.94 585.0,387.73 586.5,388.22 588.0,388.37 589.5,388.06 591.0,387.80 592.5,388.03 594.0,388.76 595.5,387.49 597.0,388.46 598.5,388.26 600.0,387.50 601.5,388.06 603.0,388.59 604.5,388.39 606.0,387.59 607.5,389.25 609.0,388.90 610.5,389.23 612.0,387.67 613.5,387.96 615.0,387.56 616.5,388.89 618.0,387.98 619.5,387.72 621.0,388.25 622.5,389.13 624.0,388.97 625.5,387.96 627.0,387.76 628.5,389.15 630.0,388.52 631.5,388.76 633.0,387.66 634.5,387.60 636.0,388.74 637.5,388.27 639.0,387.63 640.5,389.19 642.0,388.64 643.5,388.94 645.0,387.65 646.5,389.04 648.0,387.62 649.5,389.05 651.0,388.34 652.5,388.20 654.0,388.46 655.5,388.91 657.0,388.11 658.5,387.95 660.0,388.42 661.5,388.08 663.0,387.92 664.5,387.98 666.0,387.84 667.5,388.02 669.0,388.16 670.5,388.14 672.0,388.69 673.5,388.12 675.0,388.37 676.5,387.98 678.0,388.18 679.5,387.79 681.0,388.06 682.5,387.78 684.0,388.64 685.5,388.42 687.0,387.98 688.5,388.32 690.0,388.87 691.5,387.88 693.0,388.73 694.5,388.26 696.0,388.33 697.5,388.74 699.0,388.21 700.5,388.34 702.0,388.56 703.5,388.91 705.0,388.14 706.5,388.72 708.0,388.57 709.5,388.48 711.0,388.20 712.5,388.13 714.0,387.78 715.5,387.87 717.0,387.80 718.5,388.60 720.0,388.02 721.5,387.90 723.0,387.81 724.5,388.72 726.0,388.75 727.5,388.51 729.0,388.04 730.5,387.99 732.0,388.05 733.5,388.25 735.0,387.89 736.5,388.24 738.0,388.02 739.5,388.85 741.0,388.87 742.5,388.36 744.0,387.99 745.5,388.86 747.0,388.07 748.5,388.13 750.0,387.70 751.5,388.16 753.0,388.27 754.5,388.30 756.0,387.94 757.5,388.30 759.0,387.70 760.5,388.01 762.0,387.80 763.5,388.17 765.0,387.74 766.5,387.71 768.0,388.05 769.5,387.96 771.0,388.38 772.5,388.32 774.0,388.58 775.5,388.47 777.0,388.53 778.5,388.73 780.0,388.14 781.5,388.06 783.0,388.85 784.5,387.85 786.0,388.53 787.5,388.43 789.0,387.71 790.5,388.66 792.0,388.73 793.5,388.41 795.0,388.53 796.5,388.62 798.0,387.81 799.5,388.27 801.0,388.25 802.5,388.64 804.0,388.60 805.5,388.63 807.0,388.34 808.5,388.70 810.0,388.45 811.5,388.46 813.0,387.90 814.5,387.66 816.0,387.78 817.5,388.05 819.0,387.75 820.5,388.62 822.0,388.29 823.5,388.37 825.0,388.37 826.5,388.43 828.0,388.20 829.5,387.61 831.0,388.57 832.5,388.51 834.0,388.21 835.5,388.25 837.0,388.40 838.5,387.68 840.0,388.49 841.5,387.90 843.0,387.69 844.5,387.92 846.0,388.48 847.5,387.85 849.0,388.49 850.5,388.77 852.0,388.19 852.0,388.20 852,500.5 42,500.5"/></clipPath>
<g clip-path="url(#sp)">
<line x1="68.1" y1="380" x2="68.1" y2="500.5" stroke="#142152" stroke-width="1"/>
<line x1="95.15" y1="380" x2="95.15" y2="500.5" stroke="#142152" stroke-width="1"/>
<line x1="122.2" y1="380" x2="122.2" y2="500.5" stroke="#142152" stroke-width="1"/>
<line x1="149.25" y1="380" x2="149.25" y2="500.5" stroke="#142152" stroke-width="1"/>
<line x1="176.3" y1="380" x2="176.3" y2="500.5" stroke="#142152" stroke-width="1"/>
<line x1="203.35" y1="380" x2="203.35" y2="500.5" stroke="#142152" stroke-width="1"/>
<line x1="230.4" y1="380" x2="230.4" y2="500.5" stroke="#142152" stroke-width="1"/>
<line x1="257.45" y1="380" x2="257.45" y2="500.5" stroke="#142152" stroke-width="1"/>
<line x1="284.5" y1="380" x2="284.5" y2="500.5" stroke="#142152" stroke-width="1"/>
<line x1="311.55" y1="380" x2="311.55" y2="500.5" stroke="#142152" stroke-width="1"/>
<line x1="338.6" y1="380" x2="338.6" y2="500.5" stroke="#142152" stroke-width="1"/>
<line x1="365.65" y1="380" x2="365.65" y2="500.5" stroke="#142152" stroke-width="1"/>
<line x1="392.7" y1="380" x2="392.7" y2="500.5" stroke="#142152" stroke-width="1"/>
<line x1="419.75" y1="380" x2="419.75" y2="500.5" stroke="#142152" stroke-width="1"/>
<line x1="446.8" y1="380" x2="446.8" y2="500.5" stroke="#142152" stroke-width="1"/>
<line x1="473.85" y1="380" x2="473.85" y2="500.5" stroke="#142152" stroke-width="1"/>
<line x1="500.9" y1="380" x2="500.9" y2="500.5" stroke="#142152" stroke-width="1"/>
<line x1="527.95" y1="380" x2="527.95" y2="500.5" stroke="#142152" stroke-width="1"/>
<line x1="555.0" y1="380" x2="555.0" y2="500.5" stroke="#142152" stroke-width="1"/>
<line x1="582.05" y1="380" x2="582.05" y2="500.5" stroke="#142152" stroke-width="1"/>
<line x1="609.1" y1="380" x2="609.1" y2="500.5" stroke="#142152" stroke-width="1"/>
<line x1="636.15" y1="380" x2="636.15" y2="500.5" stroke="#142152" stroke-width="1"/>
<line x1="663.2" y1="380" x2="663.2" y2="500.5" stroke="#142152" stroke-width="1"/>
<line x1="690.25" y1="380" x2="690.25" y2="500.5" stroke="#142152" stroke-width="1"/>
<line x1="717.3" y1="380" x2="717.3" y2="500.5" stroke="#142152" stroke-width="1"/>
<line x1="744.35" y1="380" x2="744.35" y2="500.5" stroke="#142152" stroke-width="1"/>
<line x1="771.4" y1="380" x2="771.4" y2="500.5" stroke="#142152" stroke-width="1"/>
<line x1="798.45" y1="380" x2="798.45" y2="500.5" stroke="#142152" stroke-width="1"/>
<line x1="825.5" y1="380" x2="825.5" y2="500.5" stroke="#142152" stroke-width="1"/>
<line x1="42" y1="385.1" x2="852" y2="385.1" stroke="#142152" stroke-width="1"/>
<line x1="42" y1="411.8" x2="852" y2="411.8" stroke="#142152" stroke-width="1"/>
<line x1="42" y1="438.5" x2="852" y2="438.5" stroke="#142152" stroke-width="1"/>
<line x1="42" y1="465.2" x2="852" y2="465.2" stroke="#142152" stroke-width="1"/>
<line x1="42" y1="491.9" x2="852" y2="491.9" stroke="#142152" stroke-width="1"/>
</g>
<path d="M42.5,357 L46.5,352.2 L51,352.2 L51,361.8 L46.5,361.8 Z" fill="#d6d6d6"/>
<path d="M42.5,411.3 L46.5,406.5 L51,406.5 L51,416.1 L46.5,416.1 Z" fill="#d6d6d6"/>
<text transform="translate(37.8 307.9) scale(1 1.06)" font-size="8.1" fill="#d4d4d4" text-anchor="end" font-weight="normal" >-12</text>
<text transform="translate(37.8 334.6) scale(1 1.06)" font-size="8.1" fill="#d4d4d4" text-anchor="end" font-weight="normal" >-24</text>
<text transform="translate(37.8 361.3) scale(1 1.06)" font-size="8.1" fill="#d4d4d4" text-anchor="end" font-weight="normal" >-36</text>
<text transform="translate(37.8 388.0) scale(1 1.06)" font-size="8.1" fill="#d4d4d4" text-anchor="end" font-weight="normal" >-48</text>
<text transform="translate(37.8 414.7) scale(1 1.06)" font-size="8.1" fill="#d4d4d4" text-anchor="end" font-weight="normal" >-60</text>
<text transform="translate(37.8 441.4) scale(1 1.06)" font-size="8.1" fill="#d4d4d4" text-anchor="end" font-weight="normal" >-72</text>
<text transform="translate(37.8 468.1) scale(1 1.06)" font-size="8.1" fill="#d4d4d4" text-anchor="end" font-weight="normal" >-84</text>
<text transform="translate(37.8 494.8) scale(1 1.06)" font-size="8.1" fill="#d4d4d4" text-anchor="end" font-weight="normal" >-96</text>
<text transform="translate(95.1 511.1) scale(1 1.06)" font-size="8.0" fill="#d4d4d4" text-anchor="middle" font-weight="normal" >31.5</text>
<text transform="translate(176.3 511.1) scale(1 1.06)" font-size="8.0" fill="#d4d4d4" text-anchor="middle" font-weight="normal" >63</text>
<text transform="translate(257.4 511.1) scale(1 1.06)" font-size="8.0" fill="#d4d4d4" text-anchor="middle" font-weight="normal" >125</text>
<text transform="translate(338.6 511.1) scale(1 1.06)" font-size="8.0" fill="#d4d4d4" text-anchor="middle" font-weight="normal" >250</text>
<text transform="translate(419.8 511.1) scale(1 1.06)" font-size="8.0" fill="#d4d4d4" text-anchor="middle" font-weight="normal" >500</text>
<text transform="translate(500.9 511.1) scale(1 1.06)" font-size="8.0" fill="#d4d4d4" text-anchor="middle" font-weight="normal" >1k</text>
<text transform="translate(582.0 511.1) scale(1 1.06)" font-size="8.0" fill="#d4d4d4" text-anchor="middle" font-weight="normal" >2k</text>
<text transform="translate(663.2 511.1) scale(1 1.06)" font-size="8.0" fill="#d4d4d4" text-anchor="middle" font-weight="normal" >4k</text>
<text transform="translate(744.4 511.1) scale(1 1.06)" font-size="8.0" fill="#d4d4d4" text-anchor="middle" font-weight="normal" >8k</text>
<text transform="translate(825.5 511.1) scale(1 1.06)" font-size="8.0" fill="#d4d4d4" text-anchor="middle" font-weight="normal" >16k</text>
<text transform="translate(447.3 524.5) scale(1 1.06)" font-size="8.9" fill="#d4d4d4" text-anchor="middle" font-weight="normal" >Frequency (Hz)</text>
<text x="15.3" y="389.4" font-size="9" fill="#d4d4d4" text-anchor="middle" transform="rotate(-90 15.3 389.4)">Level (dB)</text>
<text x="58.6" y="292.7" font-size="10.0" fill="#f2f2f2" text-anchor="start" font-weight="bold" >RTA</text>
<path d="M78.6,285.3 L87.2,285.3 L82.9,293.8 Z" fill="#f2f2f2"/>
<text transform="translate(824.2 293.8) scale(1 0.97)" font-size="10.35" fill="#f2f2f2" text-anchor="end" font-weight="bold" >Nexus Go</text>
<path d="M826.2,286.4 L835.6,286.4 L830.9,294.8 Z" fill="#f2f2f2"/>
<rect x="782.5" y="484.2" width="54" height="12.5" rx="3.5" fill="#000" stroke="#e8e8e8" stroke-width="1"/>
<text transform="translate(784.5 494.2) scale(1 1.06)" font-size="10.1" fill="#f2f2f2" text-anchor="start" font-weight="bold" >1/48 Oct</text>
<path d="M825.6,486.2 L834.8,486.2 L830.2,494.8 Z" fill="#f2f2f2"/>
<rect x="5.75" y="517.75" width="9.5" height="9.5" rx="1.8" fill="none" stroke="#d0d0d0" stroke-width="1.5"/>
<path d="M8,520 L13,525 M13,520 L8,525" stroke="#e0e0e0" stroke-width="1.5"/>
<polygon points="862.45,517.50 864.55,517.50 864.64,519.17 866.16,520.05 867.65,519.29 868.70,521.11 867.30,522.02 867.30,523.78 868.70,524.69 867.65,526.51 866.16,525.75 864.64,526.63 864.55,528.30 862.45,528.30 862.36,526.63 860.84,525.75 859.35,526.51 858.30,524.69 859.70,523.78 859.70,522.02 858.30,521.11 859.35,519.29 860.84,520.05 862.36,519.17" fill="none" stroke="#dcdcdc" stroke-width="1.25" stroke-linejoin="round"/>
<circle cx="863.5" cy="522.9" r="2.1" fill="none" stroke="#dcdcdc" stroke-width="1.2"/>
<rect x="3" y="529.5" width="868" height="1.5" fill="#3e444a" />
<rect x="875.5" y="2.5" width="56.5" height="21.5" rx="2" fill="#8b9097"/>
<rect x="937" y="2.5" width="44" height="21.5" rx="2" fill="#6a6f76"/>
<rect x="986.5" y="2.5" width="34.5" height="21.5" rx="2" fill="#6a6f76"/>
<text transform="translate(903.6 16.5) scale(1 1.06)" font-size="9.45" fill="#ececec" text-anchor="middle" font-weight="normal" >Real Time</text>
<text transform="translate(959 16.5) scale(1 1.06)" font-size="9.7" fill="#ececec" text-anchor="middle" font-weight="normal" >Impulse</text>
<text transform="translate(1003.5 16.5) scale(1 1.06)" font-size="9.6" fill="#ececec" text-anchor="middle" font-weight="normal" >SPL</text>
<rect x="875.5" y="29.5" width="145.5" height="55.5" rx="5" fill="#0c0c0c" stroke="#3e4247" stroke-width="1.4"/>
<text transform="translate(905.7 65) scale(1 1.06)" font-size="20" fill="#f4f4f4" text-anchor="start" font-weight="bold" >0.0</text>
<text transform="translate(1000 42.7) scale(1 1.06)" font-size="9.6" fill="#dcdcdc" text-anchor="end" font-weight="normal" >None</text>
<text transform="translate(1000 59.4) scale(1 1.06)" font-size="9.6" fill="#dcdcdc" text-anchor="end" font-weight="normal" >dB FS Peak</text>
<text transform="translate(998.6 76.7) scale(1 1.06)" font-size="9.0" fill="#dcdcdc" text-anchor="end" font-weight="normal" >Max 0.0</text>
<path d="M1007.9,39.8 L1012.9,39.8 L1010.4,42.6 Z" fill="#e0e0e0"/>
<path d="M1007.9,57.2 L1012.9,57.2 L1010.4,60 Z" fill="#e0e0e0"/>
<circle cx="1010.2" cy="72.8" r="4" fill="#6c6c6c"/>
<path d="M875.5,439.5 L875.5,96 Q875.5,90.5 881,90.5 L1015.5,90.5 Q1021.5,90.5 1021.5,96 L1021.5,439.5 Z" fill="#202326" stroke="#3e4247" stroke-width="1.6"/>
<text transform="translate(947.4 108) scale(1 1.06)" font-size="10.35" fill="#e4e4e4" text-anchor="middle" font-weight="normal" >Transfer Function</text>
<rect x="882" y="115.5" width="132" height="1" fill="#3a3e43" />
<text transform="translate(975.6 135) scale(1 1.06)" font-size="9.1" fill="#dcdcdc" text-anchor="end" font-weight="normal" >Averaging Depth:</text>
<rect x="979.7" y="124.4" width="30.59999999999991" height="14.699999999999989" rx="3" fill="#c9ccce"/>
<text transform="translate(984.7 135) scale(1 1.06)" font-size="9.6" fill="#2a2a2a" text-anchor="start" font-weight="normal" >5</text>
<path d="M1001.2,132.4 L1006.2,132.4 L1003.7,135.8 Z" fill="#1a1a1a"/>
<rect x="882" y="146.5" width="132" height="1" fill="#3a3e43" />
<rect x="882.6" y="155.7" width="43.0" height="11.900000000000006" rx="1.5" fill="#6a6f76"/>
<rect x="927" y="155.7" width="43" height="11.900000000000006" rx="1.5" fill="#6a6f76"/>
<rect x="971" y="155.7" width="43.299999999999955" height="11.900000000000006" rx="1.5" fill="#6a6f76"/>
<path d="M900.5,157.6 L908.2,161.6 L900.5,165.6 Z" fill="#f2f2f2"/>
<rect x="944.3" y="158" width="7.4" height="7" fill="#f2f2f2" />
<rect x="989.6" y="158.6" width="2.2" height="6.2" fill="#f2f2f2" />
<rect x="993.5" y="158.6" width="2.2" height="6.2" fill="#f2f2f2" />
<rect x="882.6" y="171" width="41.69999999999993" height="11.699999999999989" rx="1.5" fill="#6a6f76"/>
<rect x="927.3" y="171" width="42.0" height="11.699999999999989" rx="1.5" fill="#6a6f76"/>
<rect x="972.7" y="171" width="41.59999999999991" height="11.699999999999989" rx="1.5" fill="#6a6f76"/>
<text transform="translate(903.5 180.2) scale(1 1.06)" font-size="8.9" fill="#ececec" text-anchor="middle" font-weight="normal" >Track</text>
<circle cx="948.3" cy="177.4" r="4.1" fill="none" stroke="#f0f0f0" stroke-width="1.2"/>
<path d="M948.3,175 L948.3,177.6" stroke="#f0f0f0" stroke-width="1.1"/>
<path d="M946.9,172.1 L949.7,172.1" stroke="#f0f0f0" stroke-width="1.2"/>
<path d="M991,175 L998,181.5 M997,174.5 L989.5,181.5" stroke="#f0f0f0" stroke-width="1.5"/>
<path d="M988.2,174.6 L991.6,171.6 L993.4,173.5 L990,176.5 Z" fill="#f0f0f0"/>
<path d="M995.8,172.4 A2.6,2.6 0 1 0 999.2,175.6" fill="none" stroke="#f0f0f0" stroke-width="1.4"/>
<rect x="882" y="191" width="132" height="1" fill="#3a3e43" />
<rect x="883.3" y="200.3" width="129.8" height="53.4" rx="3" fill="#6d6e70" stroke="#1fb01f" stroke-width="2"/>
<rect x="885" y="202" width="126.4" height="50" rx="2" fill="none" stroke="#858688" stroke-width="0.8"/>
<defs><radialGradient id="ball" cx="0.45" cy="0.35" r="0.65"><stop offset="0" stop-color="#30c030"/><stop offset="1" stop-color="#0c7f0c"/></radialGradient></defs>
<circle cx="893.9" cy="210.2" r="7.2" fill="url(#ball)"/>
<text transform="translate(908 214) scale(1 1.06)" font-size="10" fill="#f0f0f0" text-anchor="start" font-weight="normal" >Nexus GO test</text>
<path d="M995.4,206 L1008,210.5 L995.4,215.1 Z" fill="#2db52d"/>
<text transform="translate(892.6 225.7) scale(1 1.06)" font-size="6" fill="#f0f0f0" text-anchor="middle" font-weight="bold" >M</text>
<text transform="translate(892.6 234) scale(1 1.06)" font-size="6" fill="#f0f0f0" text-anchor="middle" font-weight="bold" >R</text>
<rect x="895.7" y="221.6" width="60" height="3.9" fill="#050505" />
<rect x="895.7" y="221.6" width="33" height="3.9" fill="#12aa12" />
<rect x="895.7" y="229.8" width="60" height="3.6" fill="#050505" />
<rect x="895.7" y="229.8" width="32.3" height="3.6" fill="#4a8de8" />
<rect x="928" y="229.5" width="2" height="4.2" fill="#e8d20a" />
<rect x="947" y="221.6" width="0.8" height="3.9" fill="#3a3a3a" />
<rect x="947" y="229.8" width="0.8" height="3.6" fill="#3a3a3a" />
<rect x="958" y="220.9" width="36.60000000000002" height="13.099999999999994" rx="0.5" fill="#c8cbcd"/>
<text transform="translate(962 231.6) scale(1 1.06)" font-size="9.6" fill="#2a2a2a" text-anchor="start" font-weight="normal" >7.19</text>
<circle cx="1002.3" cy="227.3" r="4.3" fill="#585a5c"/>
<text transform="translate(906 248) scale(1 1.06)" font-size="9.3" fill="#ececec" text-anchor="start" font-weight="normal" >Find</text>
<text transform="translate(933 248) scale(1 1.06)" font-size="9.0" fill="#ececec" text-anchor="start" font-weight="normal" >Track</text>
<text transform="translate(968.4 248) scale(1 1.06)" font-size="9.5" fill="#ececec" text-anchor="middle" font-weight="normal" >-</text>
<text transform="translate(983.6 248) scale(1 1.06)" font-size="9.5" fill="#ececec" text-anchor="middle" font-weight="normal" >+</text>
<rect x="883.5" y="260.7" width="130.5" height="16.6" rx="3" fill="#23272b" stroke="#44484d" stroke-width="1"/>
<text transform="translate(948 272.6) scale(1 1.06)" font-size="9.6" fill="#e4e4e4" text-anchor="middle" font-weight="normal" >+ TF Engine</text>
<rect x="875.6" y="444" width="72.39999999999998" height="13" rx="1" fill="#6a6f76"/>
<rect x="949" y="444" width="71.39999999999998" height="13" rx="1" fill="#6a6f76"/>
<text transform="translate(911.8 454.3) scale(1 1.06)" font-size="9" fill="#ececec" text-anchor="middle" font-weight="normal" >View</text>
<text transform="translate(984.7 454.3) scale(1 1.06)" font-size="9" fill="#ececec" text-anchor="middle" font-weight="normal" >Timer</text>
<path d="M875.5,462.5 L1021,462.5 L1021,524.5 Q1021,529 1016.5,529 L880,529 Q875.5,529 875.5,524.5 Z" fill="#202326" stroke="#3e4247" stroke-width="1.6"/>
<text transform="translate(946.9 476.7) scale(1 1.06)" font-size="10.6" fill="#e4e4e4" text-anchor="middle" font-weight="normal" >Signal Generator</text>
<rect x="878.7" y="483.6" width="135.6" height="1" fill="#3a3e43" />
<rect x="878.7" y="493" width="63.5" height="14.5" rx="2.5" fill="#c9ccce"/>
<text transform="translate(883.2 503.2) scale(1 1.06)" font-size="9.6" fill="#1e1e1e" text-anchor="start" font-weight="normal" >Pink Noise</text>
<path d="M933.9,502.2 L938.9,502.2 L936.4,505.6 Z" fill="#1a1a1a"/>
<rect x="946" y="493.6" width="34.799999999999955" height="12.699999999999989" rx="1" fill="#c5c8ca"/>
<text transform="translate(963.4 503.2) scale(1 1.06)" font-size="9.2" fill="#262626" text-anchor="middle" font-weight="normal" >-22 dB</text>
<rect x="984.6" y="492.5" width="33.10000000000002" height="14.5" rx="2.5" fill="#e5202c"/>
<text transform="translate(1001.2 503.3) scale(1 1.06)" font-size="9.4" fill="#fafafa" text-anchor="middle" font-weight="normal" >On</text>
<rect x="878.7" y="510.8" width="63.5" height="14.199999999999989" rx="2.5" fill="#c9ccce"/>
<text transform="translate(883.2 520.7) scale(1 1.06)" font-size="9.6" fill="#1e1e1e" text-anchor="start" font-weight="normal" >Output</text>
<path d="M933.9,519.8 L938.9,519.8 L936.4,523.2 Z" fill="#1a1a1a"/>
<rect x="947.3" y="511.3" width="33.0" height="13.199999999999989" rx="1.5" fill="#6a6f76"/>
<rect x="984.6" y="511.3" width="32.39999999999998" height="13.199999999999989" rx="1.5" fill="#6a6f76"/>
<text transform="translate(963.8 521) scale(1 1.06)" font-size="9" fill="#ececec" text-anchor="middle" font-weight="normal" >-</text>
<text transform="translate(1000.8 521.2) scale(1 1.06)" font-size="9" fill="#ececec" text-anchor="middle" font-weight="normal" >+</text>
</svg></body></html>
